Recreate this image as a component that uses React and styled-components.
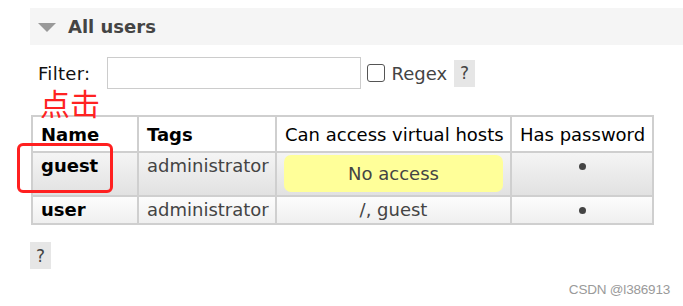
import React from "react";
import styled, { createGlobalStyle } from "styled-components";

const GlobalStyle = createGlobalStyle`
  html, body {
    margin: 0;
    padding: 0;
    background: #fff;
  }
  body {
    font-family: "DejaVu Sans", Verdana, sans-serif;
    color: #444;
  }
`;

const Page = styled.div`
  position: relative;
  width: 683px;
  height: 306px;
  padding: 8px 0 0 30px;
  box-sizing: border-box;
  overflow: hidden;
`;

const SectionHeader = styled.div`
  display: flex;
  align-items: center;
  gap: 12px;
  height: 37px;
  padding-left: 8px;
  background: #f5f5f5;
  font-size: 18px;
  font-weight: bold;
  color: #444;
`;

const Triangle = styled.span`
  width: 0;
  height: 0;
  border-left: 9px solid transparent;
  border-right: 9px solid transparent;
  border-top: 9px solid #999;
  margin-top: 2px;
`;

const FilterRow = styled.div`
  display: flex;
  align-items: center;
  margin-top: 12px;
  padding-left: 8px;
  font-size: 18px;
  line-height: 21px;
`;

const FilterLabel = styled.label`
  color: #111;
  margin-right: 17px;
  letter-spacing: 0.3px;
`;

const FilterInput = styled.input`
  width: 254px;
  height: 32px;
  box-sizing: border-box;
  border: 1px solid #ccc;
  margin: 0 6px 0 0;
  padding: 0 4px;
`;

const Check = styled.input`
  appearance: none;
  width: 18px;
  height: 18px;
  box-sizing: border-box;
  border: 1.5px solid #555;
  border-radius: 3px;
  background: #fff;
  margin: 0 6px 0 0;
`;

const RegexLabel = styled.span`
  color: #444;
  margin-right: 7px;
`;

const HelpButton = styled.span`
  display: inline-flex;
  align-items: center;
  justify-content: center;
  width: 21px;
  height: 27px;
  background: #e6e6e6;
  color: #444;
  font-size: 17px;
`;

const Table = styled.table`
  border-collapse: collapse;
  table-layout: fixed;
  width: 621px;
  margin: 26px 0 0 1px;
  font-size: 18px;
  line-height: 21px;
`;

const Th = styled.th`
  border: 2px solid #cfcfcf;
  padding: 7px 8px 6px;
  text-align: ${(p) => (p.$center ? "center" : "left")};
  font-weight: ${(p) => (p.$plain ? "normal" : "bold")};
  color: #000;
  background: #fff;
  white-space: nowrap;
`;

const Row = styled.tr`
  background: ${(p) =>
    p.$odd
      ? "linear-gradient(#f5f5f5, #e1e1e1)"
      : "linear-gradient(#fdfdfd, #efefef)"};
`;

const Td = styled.td`
  border: 2px solid #cfcfcf;
  padding: 2px ${(p) => (p.$tight ? 7 : 8)}px 3px;
  vertical-align: top;
  text-align: ${(p) => (p.$center ? "center" : "left")};
  color: ${(p) => (p.$bold ? "#000" : "#444")};
  font-weight: ${(p) => (p.$bold ? "bold" : "normal")};
  white-space: nowrap;
`;

const Pill = styled.div`
  height: 37px;
  line-height: 37px;
  border-radius: 7px;
  background: #ffff99;
  text-align: center;
  color: #444;
`;

const Dot = styled.span`
  display: inline-block;
  width: 7px;
  height: 7px;
  border-radius: 50%;
  background: #444;
  vertical-align: middle;
  margin-top: -2px;
`;

const Footer = styled.div`
  margin-top: 17px;
`;

const ClickNote = styled.div`
  position: absolute;
  left: 40px;
  top: 89px;
  font-family: "Noto Sans CJK SC", sans-serif;
  font-size: 30px;
  line-height: 27px;
  color: #ff2222;
`;

const Highlight = styled.div`
  position: absolute;
  left: 17px;
  top: 143px;
  width: 96px;
  height: 50px;
  box-sizing: border-box;
  border: 3px solid #ff2020;
  border-radius: 6px;
`;

const Watermark = styled.div`
  position: absolute;
  right: 13px;
  top: 282px;
  font-family: "Liberation Sans", Arial, sans-serif;
  font-size: 13.5px;
  color: #9a9a9a;
  letter-spacing: -0.2px;
`;

const users = [
  { name: "guest", tags: "administrator", vhosts: null, password: true },
  { name: "user", tags: "administrator", vhosts: "/, guest", password: true },
];

export default function App() {
  return (
    <>
      <GlobalStyle />
      <Page>
        <SectionHeader>
          <Triangle />
          All users
        </SectionHeader>
        <FilterRow>
          <FilterLabel>Filter:</FilterLabel>
          <FilterInput type="text" />
          <Check type="checkbox" />
          <RegexLabel>Regex</RegexLabel>
          <HelpButton>?</HelpButton>
        </FilterRow>
        <Table>
          <colgroup>
            <col style={{ width: 106 }} />
            <col style={{ width: 138 }} />
            <col style={{ width: 235 }} />
            <col style={{ width: 142 }} />
          </colgroup>
          <thead>
            <tr>
              <Th>Name</Th>
              <Th>Tags</Th>
              <Th $plain $center>Can access virtual hosts</Th>
              <Th $plain $center>Has password</Th>
            </tr>
          </thead>
          <tbody>
            {users.map((u, i) => (
              <Row key={u.name} $odd={i % 2 === 0}>
                <Td $bold>{u.name}</Td>
                <Td>{u.tags}</Td>
                <Td $center $tight>
                  {u.vhosts ? u.vhosts : <Pill>No access</Pill>}
                </Td>
                <Td $center>{u.password ? <Dot /> : null}</Td>
              </Row>
            ))}
          </tbody>
        </Table>
        <Footer>
          <HelpButton>?</HelpButton>
        </Footer>
        <ClickNote>点击</ClickNote>
        <Highlight />
        <Watermark>CSDN @l386913</Watermark>
      </Page>
    </>
  );
}
